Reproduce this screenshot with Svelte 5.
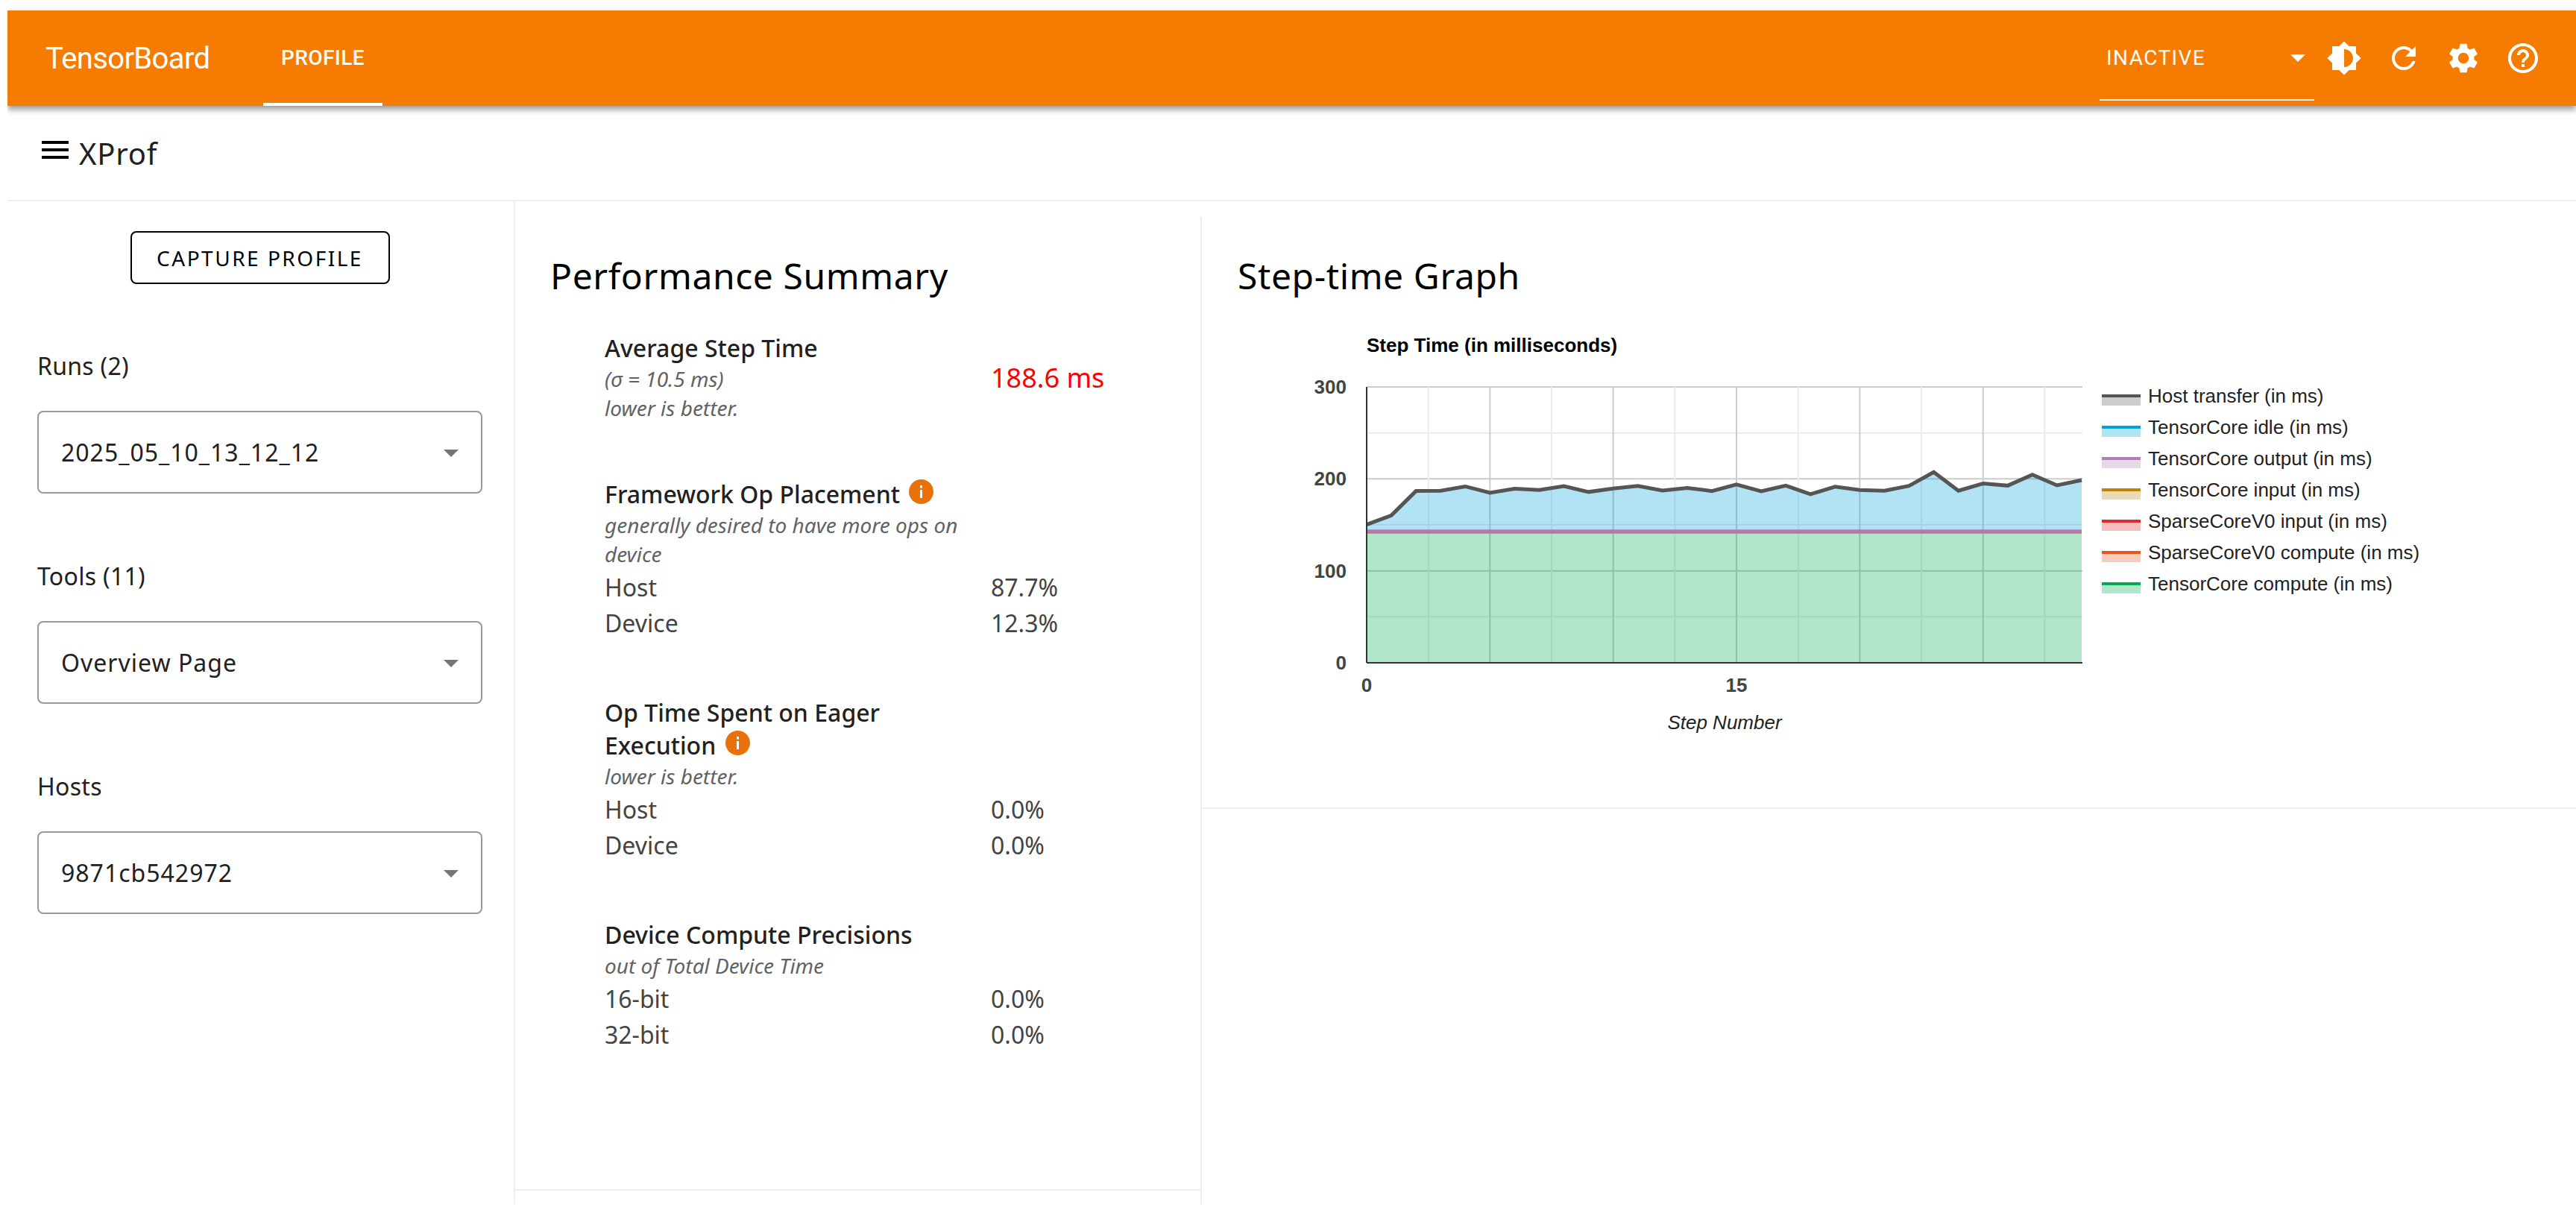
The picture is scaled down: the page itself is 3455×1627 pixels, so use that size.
<script lang="ts">
  const PLOT = { left: 1833, right: 2792, top: 519, bottom: 889 };
  const SVG_LEFT = 1612;
  const SVG_TOP = 430;

  const stepTimes = [
    150.3, 160.3, 186.8, 187.1, 191.8, 184.9, 189.3, 188, 192.1, 185.8, 189.6, 192.4, 187.4, 190.2, 186.8,
    194, 186.5, 192.7, 183.4, 191.5, 188, 187.1, 192.4, 207.4, 187.1, 194.9, 192.7, 204.5, 193, 198.6,
  ];

  const legend = [
    { label: "Host transfer (in ms)", color: "#555555" },
    { label: "TensorCore idle (in ms)", color: "#00a3d9" },
    { label: "TensorCore output (in ms)", color: "#ae7fb2" },
    { label: "TensorCore input (in ms)", color: "#b8860b" },
    { label: "SparseCoreV0 input (in ms)", color: "#e12a2a" },
    { label: "SparseCoreV0 compute (in ms)", color: "#e8561e" },
    { label: "TensorCore compute (in ms)", color: "#00ab50" },
  ];

  const stepPx = (PLOT.right - PLOT.left) / 29;
  const x = (step: number) => PLOT.left - SVG_LEFT + step * stepPx;
  const y = (ms: number) => PLOT.bottom - SVG_TOP - (ms * (PLOT.bottom - PLOT.top)) / 300;

  const line = stepTimes.map((v, i) => `${x(i)},${y(v)}`).join(" ");
  const idleArea = `${x(0)},${y(145)} ${line} ${x(29)},${y(145)}`;

  const vGrid = Array.from({ length: 11 }, (_, i) => (i + 1) * 2.5);
  const hGrid = [50, 100, 150, 200, 250, 300];

  const summary = [
    {
      title: "Framework Op Placement",
      info: true,
      notes: ["generally desired to have more ops on device"],
      rows: [["Host", "87.7%"], ["Device", "12.3%"]],
    },
    {
      title: "Op Time Spent on Eager Execution",
      info: true,
      notes: ["lower is better."],
      rows: [["Host", "0.0%"], ["Device", "0.0%"]],
    },
    {
      title: "Device Compute Precisions",
      info: false,
      notes: ["out of Total Device Time"],
      rows: [["16-bit", "0.0%"], ["32-bit", "0.0%"]],
    },
  ];

  const selectors = [
    { label: "Runs (2)", value: "2025_05_10_13_12_12" },
    { label: "Tools (11)", value: "Overview Page" },
    { label: "Hosts", value: "9871cb542972" },
  ];
</script>

<div class="app">
  <header class="toolbar">
    <div class="brand">TensorBoard</div>
    <div class="tab">PROFILE</div>
    <div class="spacer"></div>
    <div class="run-select">
      <span>INACTIVE</span>
      <i class="caret white"></i>
    </div>
    <button class="icon-btn" aria-label="Theme">
      <svg viewBox="0 0 24 24"><path d="M20 15.31L23.31 12 20 8.69V4h-4.69L12 .69 8.69 4H4v4.69L.69 12 4 15.31V20h4.69L12 23.31 15.31 20H20v-4.69zM12 18V6c3.31 0 6 2.69 6 6s-2.69 6-6 6z" /></svg>
    </button>
    <button class="icon-btn" aria-label="Refresh">
      <svg viewBox="0 0 24 24"><path d="M17.65 6.35C16.2 4.9 14.21 4 12 4c-4.42 0-7.99 3.58-7.99 8s3.57 8 7.99 8c3.73 0 6.84-2.55 7.73-6h-2.08c-.82 2.33-3.04 4-5.65 4-3.31 0-6-2.69-6-6s2.69-6 6-6c1.66 0 3.14.69 4.22 1.78L13 11h7V4l-2.35 2.35z" /></svg>
    </button>
    <button class="icon-btn" aria-label="Settings">
      <svg viewBox="0 0 24 24"><path d="M19.14,12.94c0.04-0.3,0.06-0.61,0.06-0.94c0-0.32-0.02-0.64-0.07-0.94l2.03-1.58c0.18-0.14,0.23-0.41,0.12-0.61 l-1.92-3.32c-0.12-0.22-0.37-0.29-0.59-0.22l-2.39,0.96c-0.5-0.38-1.03-0.7-1.62-0.94L14.4,2.81c-0.04-0.24-0.24-0.41-0.48-0.41 h-3.84c-0.24,0-0.43,0.17-0.47,0.41L9.25,5.35C8.66,5.59,8.12,5.92,7.63,6.29L5.24,5.33c-0.22-0.08-0.47,0-0.59,0.22L2.74,8.87 C2.62,9.08,2.66,9.34,2.86,9.48l2.03,1.58C4.84,11.36,4.8,11.69,4.8,12s0.02,0.64,0.07,0.94l-2.03,1.58 c-0.18,0.14-0.23,0.41-0.12,0.61l1.92,3.32c0.12,0.22,0.37,0.29,0.59,0.22l2.39-0.96c0.5,0.38,1.03,0.7,1.62,0.94l0.36,2.54 c0.05,0.24,0.24,0.41,0.48,0.41h3.84c0.24,0,0.44-0.17,0.47-0.41l0.36-2.54c0.59-0.24,1.13-0.56,1.62-0.94l2.39,0.96 c0.22,0.08,0.47,0,0.59-0.22l1.92-3.32c0.12-0.22,0.07-0.47-0.12-0.61L19.14,12.94z M12,15.6c-1.98,0-3.6-1.62-3.6-3.6 s1.62-3.6,3.6-3.6s3.6,1.62,3.6,3.6S13.98,15.6,12,15.6z" /></svg>
    </button>
    <button class="icon-btn" aria-label="Help">
      <svg viewBox="0 0 24 24"><path d="M11 18h2v-2h-2v2zm1-16C6.48 2 2 6.48 2 12s4.48 10 10 10 10-4.48 10-10S17.52 2 12 2zm0 18c-4.41 0-8-3.59-8-8s3.59-8 8-8 8 3.59 8 8-3.59 8-8 8zm0-14c-2.21 0-4 1.79-4 4h2c0-1.1.9-2 2-2s2 .9 2 2c0 2-3 1.75-3 5h2c0-2.25 3-2.5 3-5 0-2.21-1.79-4-4-4z" /></svg>
    </button>
  </header>

  <div class="subbar">
    <svg class="menu" viewBox="0 0 24 24"><path d="M3 18h18v-2H3v2zm0-5h18v-2H3v2zm0-7v2h18V6H3z" /></svg>
    <span>XProf</span>
  </div>

  <div class="body">
    <aside class="sidebar">
      <button class="capture">CAPTURE PROFILE</button>
      {#each selectors as s}
        <div class="sel-label">{s.label}</div>
        <div class="select">
          <span>{s.value}</span>
          <i class="caret"></i>
        </div>
      {/each}
    </aside>

    <section class="perf">
      <div class="perf-main">
        <h2>Performance Summary</h2>
        <div class="stat first">
          <div class="stat-row">
            <div class="stat-left">
              <div class="stat-title">Average Step Time</div>
              <div class="note">(σ = 10.5 ms)</div>
              <div class="note">lower is better.</div>
            </div>
            <div class="avg">188.6 ms</div>
          </div>
        </div>
        {#each summary as item}
          <div class="stat">
            <div class="stat-left">
              <div class="stat-title">
                {item.title}
                {#if item.info}
                  <svg class="info" viewBox="0 0 33 33"><circle cx="16.5" cy="16.5" r="16.5" /><rect x="15" y="14" width="3" height="11" /><rect x="15" y="8" width="3" height="3.5" /></svg>
                {/if}
              </div>
              <div class="notes">
                {#each item.notes as n}
                  <div class="note">{n}</div>
                {/each}
              </div>
            </div>
            {#each item.rows as r}
              <div class="kv"><span>{r[0]}</span><span class="kv-val">{r[1]}</span></div>
            {/each}
          </div>
        {/each}
      </div>
    </section>

    <section class="graph">
      <div class="graph-card">
        <h2>Step-time Graph</h2>
        <svg class="chart" width="1842" height="560">
          <text class="c-title" x={PLOT.left - SVG_LEFT} y="42">Step Time (in milliseconds)</text>
          {#each hGrid as g}
            <line x1={x(0)} x2={x(29) + 1} y1={y(g)} y2={y(g)} stroke={g % 100 === 0 ? "#cccccc" : "#ebebeb"} stroke-width="2" />
          {/each}
          {#each vGrid as g}
            <line x1={x(g)} x2={x(g)} y1={y(300)} y2={y(0)} stroke={g % 5 === 0 ? "#cccccc" : "#ebebeb"} stroke-width="2" />
          {/each}
          <rect x={x(0)} y={y(141)} width={x(29) - x(0)} height={y(0) - y(141)} fill="#00ab50" fill-opacity="0.3" />
          <polygon points={idleArea} fill="#00a3d9" fill-opacity="0.3" />
          <rect x={x(0)} y={y(145)} width={x(29) - x(0)} height={y(141) - y(145)} fill="#b07ab4" />
          <line x1={x(0)} x2={x(29)} y1={y(141)} y2={y(141)} stroke="#c4695f" stroke-width="1" />
          <polyline points={line} fill="none" stroke="#555555" stroke-width="5" />
          <line x1={x(0)} x2={x(0)} y1={y(300)} y2={y(0)} stroke="#333333" stroke-width="2" />
          <line x1={x(0)} x2={x(29) + 1} y1={y(0)} y2={y(0)} stroke="#333333" stroke-width="2" />
          {#each [0, 100, 200, 300] as t}
            <text class="c-axis" x={x(0) - 27} y={y(t) + 9} text-anchor="end">{t}</text>
          {/each}
          <text class="c-axis" x={x(0)} y="498" text-anchor="middle">0</text>
          <text class="c-axis" x={x(15)} y="498" text-anchor="middle">15</text>
          <text class="c-label" x="701" y="548" text-anchor="middle">Step Number</text>
          {#each legend as l, i}
            <rect x="1207" y={99 + i * 42} width="52" height="15" fill={l.color} fill-opacity="0.3" />
            <rect x="1207" y={99 + i * 42} width="52" height="4" fill={l.color} />
            <text class="c-legend" x="1269" y={110 + i * 42}>{l.label}</text>
          {/each}
        </svg>
      </div>
    </section>
  </div>
</div>

<style>
  :global(body) {
    margin: 0;
    background: #fff;
    overflow: hidden;
  }

  .app {
    height: 1615px;
    padding: 14px 0 0 10px;
    box-sizing: border-box;
    display: flex;
    flex-direction: column;
    font-family: "Noto Sans", sans-serif;
    color: #212121;
    overflow: hidden;
  }

  .toolbar {
    height: 128px;
    flex-shrink: 0;
    background: #f57c00;
    color: #fff;
    display: flex;
    align-items: center;
    font-family: Roboto, sans-serif;
    box-shadow: 0 5px 8px rgba(0, 0, 0, 0.4);
    clip-path: inset(0 0 -20px 0);
    position: relative;
    z-index: 2;
    padding-right: 31px;
  }

  .brand {
    font-size: 40px;
    letter-spacing: -0.65px;
    margin-left: 51px;
    width: 292px;
  }

  .tab {
    width: 160px;
    align-self: stretch;
    display: flex;
    align-items: center;
    justify-content: center;
    font-size: 28px;
    font-weight: 500;
    letter-spacing: 0.4px;
    box-sizing: border-box;
    border-bottom: 4px solid #fff;
    padding-top: 2px;
  }

  .spacer {
    flex: 1;
  }

  .run-select {
    width: 288px;
    height: 121px;
    align-self: flex-start;
    box-sizing: border-box;
    border-bottom: 2px solid #fff;
    padding: 7px 12px 0 9px;
    display: flex;
    align-items: center;
    justify-content: space-between;
    font-size: 28px;
    letter-spacing: 1.4px;
  }

  .caret {
    display: block;
    width: 0;
    height: 0;
    margin-top: 2px;
    border-left: 10px solid transparent;
    border-right: 10px solid transparent;
    border-top: 10px solid #757575;
  }

  .caret.white {
    border-top-color: #fff;
  }

  .icon-btn {
    width: 80px;
    height: 80px;
    background: none;
    border: 0;
    padding: 16px;
    display: flex;
  }

  .icon-btn svg {
    width: 48px;
    height: 48px;
    fill: #fff;
  }

  .subbar {
    height: 126px;
    flex-shrink: 0;
    border-bottom: 2px solid #eeeeee;
    display: flex;
    align-items: center;
    padding-left: 40px;
    gap: 8px;
    font-size: 40px;
    letter-spacing: 0.8px;
  }

  .menu {
    width: 48px;
    height: 48px;
    fill: #000;
    margin-top: -8px;
  }

  .body {
    flex: 1;
    display: flex;
    min-height: 0;
  }

  .sidebar {
    width: 681px;
    box-sizing: border-box;
    border-right: 2px solid #eeeeee;
    padding: 40px 42px 0 40px;
    display: flex;
    flex-direction: column;
    flex-shrink: 0;
  }

  .capture {
    align-self: center;
    width: 348px;
    height: 71px;
    background: #fff;
    border: 2px solid #000;
    border-radius: 8px;
    font-family: "Noto Sans", sans-serif;
    font-size: 28px;
    letter-spacing: 2.5px;
    color: #000;
    margin-bottom: 86px;
    padding: 0;
  }

  .sel-label {
    font-size: 32px;
    letter-spacing: 0.3px;
    line-height: 48px;
    margin-bottom: 36px;
  }

  .select {
    height: 111px;
    box-sizing: border-box;
    border: 2px solid #999;
    border-radius: 8px;
    display: flex;
    align-items: center;
    justify-content: space-between;
    padding: 0 30px 0 30px;
    font-size: 32px;
    letter-spacing: 1px;
    margin-bottom: 87px;
    flex-shrink: 0;
  }

  .perf {
    width: 921px;
    flex-shrink: 0;
    box-sizing: border-box;
    padding-top: 20px;
  }

  .perf-main {
    height: 100%;
    box-sizing: border-box;
    border-right: 2px solid #eeeeee;
    background: linear-gradient(#eeeeee, #eeeeee) 0 1305px / 100% 2px no-repeat;
    padding: 46px 48px 0 47px;
  }

  h2 {
    margin: 0;
    font-size: 48px;
    font-weight: 400;
    letter-spacing: 0.6px;
    line-height: 68px;
    color: #000;
  }

  .stat {
    padding-left: 73px;
    margin-top: 74px;
  }

  .stat.first {
    margin-top: 41px;
    margin-bottom: 2px;
  }

  .stat-row {
    display: flex;
    align-items: center;
  }

  .stat-left {
    width: 480px;
  }

  .stat-row .stat-left {
    width: 518px;
  }

  .stat-title {
    font-size: 32px;
    line-height: 44px;
    color: #212121;
    font-weight: 500;
  }

  .info {
    width: 33px;
    height: 33px;
    fill: #e8710a;
    vertical-align: middle;
    position: relative;
    top: -7px;
    margin-left: 4px;
  }

  .info rect {
    fill: #fff;
  }

  .notes {
    margin-bottom: 1px;
  }

  .note {
    font-size: 28px;
    font-style: italic;
    line-height: 39px;
    color: #5f6368;
  }

  .avg {
    font-size: 36px;
    color: #f00;
  }

  .kv {
    display: flex;
    font-size: 32px;
    line-height: 48px;
    color: #444;
  }

  .kv span:first-child {
    width: 518px;
  }

  .graph {
    flex: 1;
    padding-top: 20px;
  }

  .graph-card {
    height: 795px;
    box-sizing: border-box;
    border-bottom: 2px solid #eeeeee;
    position: relative;
  }

  .graph-card h2 {
    padding: 46px 0 0 48px;
  }

  .chart {
    position: absolute;
    left: 0;
    top: 140px;
    font-family: "Liberation Sans", Arial, sans-serif;
  }

  .c-title {
    font-size: 26px;
    font-weight: 700;
    fill: #000;
  }

  .c-axis {
    font-size: 26px;
    font-weight: 700;
    fill: #444;
  }

  .c-label {
    font-size: 26px;
    font-style: italic;
    fill: #222;
  }

  .c-legend {
    font-size: 26px;
    fill: #222;
  }
</style>
